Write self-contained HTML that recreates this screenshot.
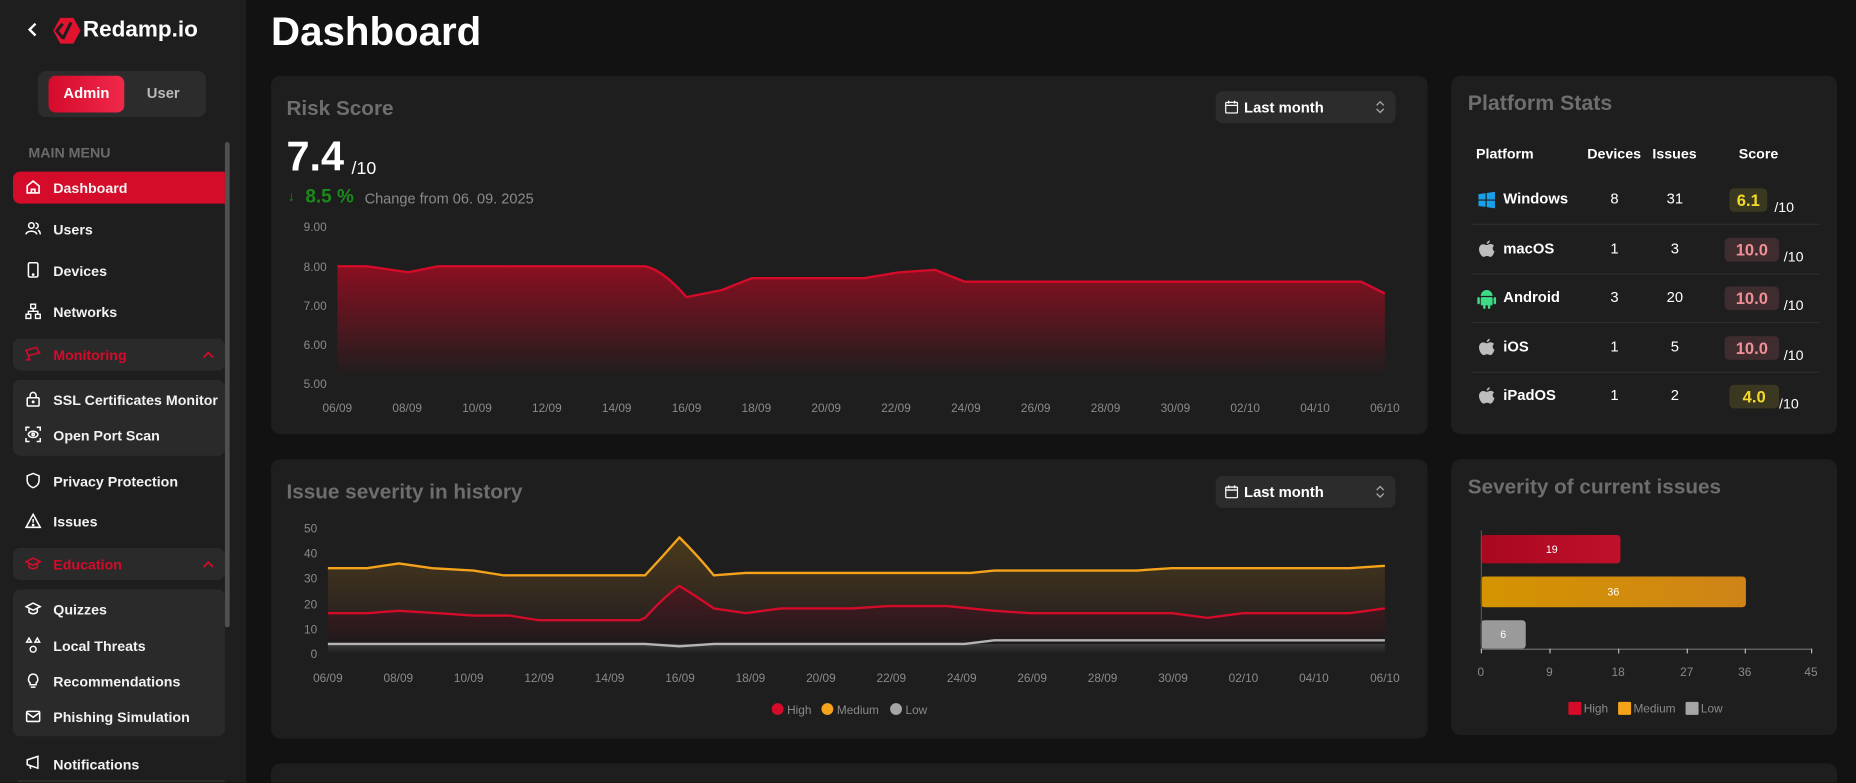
<!DOCTYPE html>
<html><head><meta charset="utf-8">
<style>
*{box-sizing:border-box;margin:0;padding:0}
html,body{width:1856px;height:783px;overflow:hidden;background:#121212}
body{font-family:"Liberation Sans",sans-serif;color:#fff}
#wrap{position:absolute;left:0;top:0;width:1568px;height:661px;transform:scale(1.18367);transform-origin:0 0;background:#121212;overflow:hidden}
.abs{position:absolute}
.side{position:absolute;left:0;top:0;width:208px;height:661px;background:#1e1e1e;overflow:hidden}
.nav{position:absolute;left:11px;width:179px;height:27px;font-size:12px;font-weight:bold;display:flex;align-items:center;padding-left:34px;color:#f2f2f2;white-space:nowrap}
.nav svg{position:absolute;left:10px;top:6px}
.grp{position:absolute;left:11px;width:179px;background:#2a2a2a;border-radius:6px}
.card{position:absolute;background:#1e1e1e;border-radius:8px}
.ttl{position:absolute;font-size:17.5px;font-weight:bold;color:#6e6e6e}
.sel{position:absolute;width:152px;height:27px;background:#2c2c2c;border-radius:6px;font-size:12.5px;font-weight:bold;color:#fff}
.sel span{position:absolute;left:24px;top:7px}
.ax{font-family:"Liberation Sans",sans-serif;font-size:10px;fill:#8a8a8a}
.th{position:absolute;top:123px;font-size:12px;font-weight:bold}
.row{position:absolute;left:1244px;width:293px;height:42px;border-bottom:1px solid #2e2e2e;font-size:12.5px}
.row .n{position:absolute;left:26px;top:13px;font-weight:bold}
.row .d{position:absolute;left:120px;width:0;top:13px;display:flex;justify-content:center}
.row .i{position:absolute;left:171px;width:0;top:13px;display:flex;justify-content:center}
.badge{position:absolute;top:11px;height:20px;border-radius:4px;font-weight:bold;font-size:14px;text-align:center;line-height:20px}
.y{background:#3a3820;color:#f3da2a}
.r{background:#3e2c2e;color:#f28e98}
.of{position:absolute;top:20px;font-size:12px}
</style></head><body><div id="wrap">

<div class="side">
  <svg class="abs" style="left:22px;top:18px" width="12" height="14" viewBox="0 0 12 14"><path d="M8 2 L3 7 L8 12" stroke="#fff" stroke-width="2" fill="none"/></svg>
  <svg class="abs" style="left:44px;top:15px" width="24" height="22" viewBox="0 0 24 22"><path d="M7 0 H18 L24 11 L18 22 H7 L1 11 Z" fill="#e2132f"/><path d="M9 5 L4 11 L9 17" stroke="#1e1e1e" stroke-width="2.6" fill="none"/><path d="M16 4 L9 18" stroke="#1e1e1e" stroke-width="2.6"/></svg>
  <div class="abs" style="left:70px;top:15px;font-size:19px;font-weight:bold">Redamp.io</div>
  <div class="abs" style="left:32px;top:60px;width:142px;height:39px;background:#2c2c2c;border-radius:7px"></div>
  <div class="abs" style="left:41px;top:64px;width:64px;height:31px;border-radius:6px;background:linear-gradient(90deg,#d50b2b,#f0284a);font-size:12.5px;font-weight:bold;text-align:center;line-height:31px">Admin</div>
  <div class="abs" style="left:124px;top:72px;font-size:12.5px;font-weight:bold;color:#b9b9b9">User</div>
  <div class="abs" style="left:24px;top:122px;font-size:12px;font-weight:bold;color:#6b6b6b">MAIN MENU</div>
  <div class="abs" style="left:190px;top:120px;width:4px;height:410px;background:#505050;border-radius:2px"></div>

  <div class="nav" style="top:145px;background:#d50b2a;border-radius:6px 0 0 6px"><svg width="14" height="14" viewBox="0 0 14 14" fill="none" stroke="#fff" stroke-width="1.4"><path d="M2 6 L7 2 L12 6 V12 H2 Z"/><path d="M5.5 12 V9 H8.5 V12"/></svg>Dashboard</div>
  <div class="nav" style="top:180px"><svg width="14" height="14" viewBox="0 0 14 14" fill="none" stroke="#fff" stroke-width="1.3"><circle cx="5.5" cy="4.5" r="2.3"/><path d="M1 12 C1 8.5 10 8.5 10 12"/><path d="M9 2.5 A2 2 0 0 1 9 7 M11 8.5 C12.5 9 13 10.5 13 12"/></svg>Users</div>
  <div class="nav" style="top:215px"><svg width="14" height="14" viewBox="0 0 14 14" fill="none" stroke="#fff" stroke-width="1.3"><rect x="3" y="1" width="8" height="12" rx="1.2"/><circle cx="7" cy="11" r=".5" fill="#fff"/></svg>Devices</div>
  <div class="nav" style="top:250px"><svg width="14" height="14" viewBox="0 0 14 14" fill="none" stroke="#fff" stroke-width="1.2"><rect x="5" y="1" width="4" height="3.5"/><rect x="1" y="9.5" width="4" height="3.5"/><rect x="9" y="9.5" width="4" height="3.5"/><path d="M7 4.5 V7 M3 9.5 V7 H11 V9.5"/></svg>Networks</div>

  <div class="grp" style="top:286px;height:27px"></div>
  <div class="nav" style="top:286px;color:#d50b2a"><svg width="14" height="14" viewBox="0 0 14 14" fill="none" stroke="#d50b2a" stroke-width="1.3"><path d="M1 4 L10 1.5 L12 6 L3 8.5 Z M4 8 L3 12 M1 12 H5 M11 5 L13 7"/></svg>Monitoring<svg style="left:160px;top:10px" width="10" height="7" viewBox="0 0 10 7"><path d="M1 6 L5 2 L9 6" stroke="#d50b2a" stroke-width="1.5" fill="none"/></svg></div>
  <div class="grp" style="top:321px;height:64px"></div>
  <div class="nav" style="top:324px"><svg width="14" height="14" viewBox="0 0 14 14" fill="none" stroke="#fff" stroke-width="1.3"><rect x="2" y="6" width="10" height="7" rx="1"/><path d="M4.5 6 V4 A2.5 2.5 0 0 1 9.5 4 V6"/><circle cx="7" cy="9.5" r=".6" fill="#fff"/></svg>SSL Certificates Monitor</div>
  <div class="nav" style="top:354px"><svg width="14" height="14" viewBox="0 0 14 14" fill="none" stroke="#fff" stroke-width="1.3"><path d="M1 4 V1 H4 M10 1 H13 V4 M13 10 V13 H10 M4 13 H1 V10"/><ellipse cx="7" cy="7" rx="4" ry="2.6"/><circle cx="7" cy="7" r="1"/></svg>Open Port Scan</div>
  <div class="nav" style="top:393px"><svg width="14" height="14" viewBox="0 0 14 14" fill="none" stroke="#fff" stroke-width="1.3"><path d="M7 1 L12 3 V7 C12 10 9.5 12 7 13 C4.5 12 2 10 2 7 V3 Z"/></svg>Privacy Protection</div>
  <div class="nav" style="top:427px"><svg width="14" height="14" viewBox="0 0 14 14" fill="none" stroke="#fff" stroke-width="1.3"><path d="M7 1.5 L13 12.5 H1 Z M7 5.5 V8.5"/><circle cx="7" cy="10.5" r=".5" fill="#fff"/></svg>Issues</div>

  <div class="grp" style="top:463px;height:27px"></div>
  <div class="nav" style="top:463px;color:#d50b2a"><svg width="14" height="14" viewBox="0 0 14 14" fill="none" stroke="#d50b2a" stroke-width="1.3"><path d="M1 5.5 L7 2.5 L13 5.5 L7 8.5 Z M3.5 7 V10 C5.5 12 8.5 12 10.5 10 V7"/></svg>Education<svg style="left:160px;top:10px" width="10" height="7" viewBox="0 0 10 7"><path d="M1 6 L5 2 L9 6" stroke="#d50b2a" stroke-width="1.5" fill="none"/></svg></div>
  <div class="grp" style="top:498px;height:124px"></div>
  <div class="nav" style="top:501px"><svg width="14" height="14" viewBox="0 0 14 14" fill="none" stroke="#fff" stroke-width="1.3"><path d="M1 5.5 L7 2.5 L13 5.5 L7 8.5 Z M3.5 7 V10 C5.5 12 8.5 12 10.5 10 V7"/></svg>Quizzes</div>
  <div class="nav" style="top:532px"><svg width="14" height="14" viewBox="0 0 14 14" fill="none" stroke="#fff" stroke-width="1.2"><path d="M3.5 1 L5.5 4.5 H1.5 Z M10.5 1 L12.5 4.5 H8.5 Z"/><circle cx="7" cy="10.5" r="2.5"/></svg>Local Threats</div>
  <div class="nav" style="top:562px"><svg width="14" height="14" viewBox="0 0 14 14" fill="none" stroke="#fff" stroke-width="1.3"><path d="M4.5 9 C2 7 3 1.5 7 1.5 C11 1.5 12 7 9.5 9 V10.5 H4.5 Z M5 12.5 H9"/></svg>Recommendations</div>
  <div class="nav" style="top:592px"><svg width="14" height="14" viewBox="0 0 14 14" fill="none" stroke="#fff" stroke-width="1.3"><rect x="1.5" y="3" width="11" height="8.5" rx="1"/><path d="M1.5 4 L7 8 L12.5 4"/></svg>Phishing Simulation</div>
  <div class="nav" style="top:631px;height:21px;overflow:hidden;align-items:flex-start;padding-top:8px"><svg width="14" height="14" viewBox="0 0 14 14" fill="none" stroke="#fff" stroke-width="1.3"><path d="M2 5 L11 2 V12 L2 9 Z M4 9.5 L5 12.5"/></svg>Notifications</div>
  <div class="abs" style="left:0;top:652px;width:208px;height:9px;background:#1e1e1e"></div>
  <div class="abs" style="left:15px;top:659px;width:175px;height:2px;background:#2e2e2e"></div>
</div>

<div class="abs" style="left:229px;top:8px;font-size:34px;font-weight:bold">Dashboard</div>

<!-- Risk card -->
<div class="card" style="left:229px;top:64px;width:977px;height:303px"></div>
<div class="ttl" style="left:242px;top:81px">Risk Score</div>
<div class="sel" style="left:1027px;top:77px"><svg class="abs" style="left:8px;top:8px" width="11" height="11" viewBox="0 0 11 11" fill="none" stroke="#fff" stroke-width="1.1"><rect x=".5" y="1.5" width="10" height="9" rx="1"/><path d="M.5 4 H10.5 M3 0 V2.5 M8 0 V2.5"/></svg><span>Last month</span><svg class="abs" style="left:135px;top:8px" width="8" height="11" viewBox="0 0 8 11" fill="none" stroke="#aaa" stroke-width="1.1"><path d="M1 4 L4 1 L7 4 M1 7 L4 10 L7 7"/></svg></div>
<div class="abs" style="left:242px;top:113px;font-size:35px;font-weight:bold">7.4</div>
<div class="abs" style="left:297px;top:134px;font-size:15px">/10</div>
<div class="abs" style="left:243px;top:159px;font-size:12px;color:#1a8a1a">↓</div>
<div class="abs" style="left:258px;top:158px;font-size:16px;font-weight:bold;color:#1a8a1a">8.5 %</div>
<div class="abs" style="left:308px;top:161px;font-size:12.3px;color:#8a8a8a">Change from 06. 09. 2025</div>

<svg class="abs" style="left:0;top:0" width="1568" height="661">
<defs>
<linearGradient id="gr" x1="0" y1="0" x2="0" y2="1"><stop offset="0" stop-color="#8a0f20"/><stop offset="1" stop-color="#1e1e1e"/></linearGradient>
<linearGradient id="go" x1="0" y1="0" x2="0" y2="1"><stop offset="0" stop-color="#4a3a1c"/><stop offset="1" stop-color="#2a2220"/></linearGradient>
<linearGradient id="gh" x1="0" y1="0" x2="0" y2="1"><stop offset="0" stop-color="#4a1a20"/><stop offset="1" stop-color="#1f1a1b"/></linearGradient>
<linearGradient id="gl" x1="0" y1="0" x2="0" y2="1"><stop offset="0" stop-color="#3a3a3a"/><stop offset="1" stop-color="#1e1e1e"/></linearGradient>
<linearGradient id="bh" x1="0" x2="1"><stop offset="0" stop-color="#a80820"/><stop offset="1" stop-color="#c0102a"/></linearGradient>
<linearGradient id="bm" x1="0" x2="1"><stop offset="0" stop-color="#d49400"/><stop offset="1" stop-color="#d08418"/></linearGradient>
</defs>
<g class="ax" text-anchor="end">
<text x="276" y="195">9.00</text><text x="276" y="229">8.00</text><text x="276" y="262">7.00</text><text x="276" y="295">6.00</text><text x="276" y="328">5.00</text>
</g>
<path d="M285 225 L310 225 L345 230 L370 225 L545 225 Q560 228 580 251 L610 245 L635 235 L730 235 L760 230 L790 228 L815 238 L1150 238 L1170 248 L1170 318 L285 318 Z" fill="url(#gr)"/>
<path d="M285 225 L310 225 L345 230 L370 225 L545 225 Q560 228 580 251 L610 245 L635 235 L730 235 L760 230 L790 228 L815 238 L1150 238 L1170 248" stroke="#d50b2a" stroke-width="2" fill="none" stroke-linejoin="round"/>
<g class="ax" text-anchor="middle">
<text x="285" y="348">06/09</text><text x="344" y="348">08/09</text><text x="403" y="348">10/09</text><text x="462" y="348">12/09</text><text x="521" y="348">14/09</text><text x="580" y="348">16/09</text><text x="639" y="348">18/09</text><text x="698" y="348">20/09</text><text x="757" y="348">22/09</text><text x="816" y="348">24/09</text><text x="875" y="348">26/09</text><text x="934" y="348">28/09</text><text x="993" y="348">30/09</text><text x="1052" y="348">02/10</text><text x="1111" y="348">04/10</text><text x="1170" y="348">06/10</text>
</g>
</svg>

<!-- Platform card -->
<div class="card" style="left:1226px;top:64px;width:326px;height:303px"></div>
<div class="ttl" style="left:1240px;top:77px;font-size:18px">Platform Stats</div>
<div class="th" style="left:1247px">Platform</div>
<div class="th" style="left:1341px">Devices</div>
<div class="th" style="left:1396px">Issues</div>
<div class="th" style="left:1469px">Score</div>

<div class="row" style="top:148px"><svg class="abs" style="left:5px;top:14px" width="14" height="14" viewBox="0 0 14 14"><path d="M0 2 L6 1.2 V6.5 H0 Z M7 1 L14 0 V6.5 H7 Z M0 7.5 H6 V12.8 L0 12 Z M7 7.5 H14 V14 L7 13 Z" fill="#1aa0e8"/></svg><span class="n">Windows</span><span class="d">8</span><span class="i">31</span><span class="badge y" style="left:217px;width:32px">6.1</span><span class="of" style="left:255px">/10</span></div>
<div class="row" style="top:190px"><svg class="abs" style="left:5px;top:13px" width="14" height="16" viewBox="0 0 14 16"><path d="M7 4 C8 4 9 3 11 3.2 C12 3.3 12.8 4 13.2 4.6 C11.5 5.7 11.8 8.6 13.6 9.4 C13 11.2 11.8 14 10.2 14 C9 14 8.6 13.3 7.3 13.3 C6 13.3 5.5 14 4.4 14 C2.8 14 .5 10.5.5 7.6 C.5 5 2.2 3.3 4 3.3 C5.3 3.3 6 4 7 4 Z M7 3 C7 1.6 8.2.3 9.6.2 C9.7 1.7 8.4 3 7 3 Z" fill="#bdbdbd"/></svg><span class="n">macOS</span><span class="d">1</span><span class="i">3</span><span class="badge r" style="left:213px;width:46px">10.0</span><span class="of" style="left:263px">/10</span></div>
<div class="row" style="top:231px"><svg class="abs" style="left:4px;top:13px" width="16" height="17" viewBox="0 0 16 17" fill="#3ddc84"><path d="M3 6 A5 5 0 0 1 13 6 Z"/><rect x="3" y="7" width="10" height="7" rx="1"/><rect x="0" y="7" width="2.2" height="6" rx="1.1"/><rect x="13.8" y="7" width="2.2" height="6" rx="1.1"/><rect x="5" y="13" width="2" height="4" rx="1"/><rect x="9" y="13" width="2" height="4" rx="1"/></svg><span class="n">Android</span><span class="d">3</span><span class="i">20</span><span class="badge r" style="left:213px;width:46px">10.0</span><span class="of" style="left:263px">/10</span></div>
<div class="row" style="top:273px"><svg class="abs" style="left:5px;top:13px" width="14" height="16" viewBox="0 0 14 16"><path d="M7 4 C8 4 9 3 11 3.2 C12 3.3 12.8 4 13.2 4.6 C11.5 5.7 11.8 8.6 13.6 9.4 C13 11.2 11.8 14 10.2 14 C9 14 8.6 13.3 7.3 13.3 C6 13.3 5.5 14 4.4 14 C2.8 14 .5 10.5.5 7.6 C.5 5 2.2 3.3 4 3.3 C5.3 3.3 6 4 7 4 Z M7 3 C7 1.6 8.2.3 9.6.2 C9.7 1.7 8.4 3 7 3 Z" fill="#bdbdbd"/></svg><span class="n">iOS</span><span class="d">1</span><span class="i">5</span><span class="badge r" style="left:213px;width:46px">10.0</span><span class="of" style="left:263px">/10</span></div>
<div class="row" style="top:314px;border-bottom:none"><svg class="abs" style="left:5px;top:13px" width="14" height="16" viewBox="0 0 14 16"><path d="M7 4 C8 4 9 3 11 3.2 C12 3.3 12.8 4 13.2 4.6 C11.5 5.7 11.8 8.6 13.6 9.4 C13 11.2 11.8 14 10.2 14 C9 14 8.6 13.3 7.3 13.3 C6 13.3 5.5 14 4.4 14 C2.8 14 .5 10.5.5 7.6 C.5 5 2.2 3.3 4 3.3 C5.3 3.3 6 4 7 4 Z M7 3 C7 1.6 8.2.3 9.6.2 C9.7 1.7 8.4 3 7 3 Z" fill="#bdbdbd"/></svg><span class="n">iPadOS</span><span class="d">1</span><span class="i">2</span><span class="badge y" style="left:217px;width:42px">4.0</span><span class="of" style="left:259px">/10</span></div>

<!-- Issue card -->
<div class="card" style="left:229px;top:388px;width:977px;height:236px"></div>
<div class="ttl" style="left:242px;top:405px">Issue severity in history</div>
<div class="sel" style="left:1027px;top:402px"><svg class="abs" style="left:8px;top:8px" width="11" height="11" viewBox="0 0 11 11" fill="none" stroke="#fff" stroke-width="1.1"><rect x=".5" y="1.5" width="10" height="9" rx="1"/><path d="M.5 4 H10.5 M3 0 V2.5 M8 0 V2.5"/></svg><span>Last month</span><svg class="abs" style="left:135px;top:8px" width="8" height="11" viewBox="0 0 8 11" fill="none" stroke="#aaa" stroke-width="1.1"><path d="M1 4 L4 1 L7 4 M1 7 L4 10 L7 7"/></svg></div>

<div class="card" style="left:1226px;top:388px;width:326px;height:233px"></div>
<div class="ttl" style="left:1240px;top:401px">Severity of current issues</div>

<svg class="abs" style="left:0;top:0" width="1568" height="661">
<g class="ax" text-anchor="end">
<text x="268" y="450">50</text><text x="268" y="471">40</text><text x="268" y="492">30</text><text x="268" y="514">20</text><text x="268" y="535">10</text><text x="268" y="556">0</text>
</g>
<path d="M277 480 L310 480 L337 476 L365 480 L400 482 L425 486 L545 486 Q560 470 574 454 Q590 470 603 486 L630 484 L820 484 L840 482 L960 482 L990 480 L1140 480 L1170 478 L1170 518 L1140 518 L1050 518 L1020 522 L990 518 L870 518 L840 516 L800 512 L750 512 L720 514 L660 514 L630 518 L603 514 Q590 505 574 495 Q560 505 545 522 L540 524 L455 524 L430 520 L400 520 L370 518 L337 516 L310 518 L277 518 Z" fill="url(#go)"/>
<path d="M277 518 L310 518 L337 516 L370 518 L400 520 L430 520 L455 524 L540 524 L545 522 Q560 505 574 495 Q590 505 603 514 L630 518 L660 514 L720 514 L750 512 L800 512 L840 516 L870 518 L990 518 L1020 522 L1050 518 L1140 518 L1170 514 L1170 544 L277 544 Z" fill="url(#gh)"/>
<rect x="277" y="544" width="893" height="8" fill="url(#gl)"/>
<path d="M277 480 L310 480 L337 476 L365 480 L400 482 L425 486 L545 486 Q560 470 574 454 Q590 470 603 486 L630 484 L820 484 L840 482 L960 482 L990 480 L1140 480 L1170 478" stroke="#f5a31a" stroke-width="2" fill="none" stroke-linejoin="round"/>
<path d="M277 518 L310 518 L337 516 L370 518 L400 520 L430 520 L455 524 L540 524 L545 522 Q560 505 574 495 Q590 505 603 514 L630 518 L660 514 L720 514 L750 512 L800 512 L840 516 L870 518 L990 518 L1020 522 L1050 518 L1140 518 L1170 514" stroke="#d50b2a" stroke-width="2" fill="none" stroke-linejoin="round"/>
<path d="M277 544 L545 544 L574 546 L603 544 L815 544 L840 541 L1170 541" stroke="#b5b5b5" stroke-width="2" fill="none"/>
<g class="ax" text-anchor="middle">
<text x="277" y="576">06/09</text><text x="336.5" y="576">08/09</text><text x="396" y="576">10/09</text><text x="455.5" y="576">12/09</text><text x="515" y="576">14/09</text><text x="574.5" y="576">16/09</text><text x="634" y="576">18/09</text><text x="693.5" y="576">20/09</text><text x="753" y="576">22/09</text><text x="812.5" y="576">24/09</text><text x="872" y="576">26/09</text><text x="931.5" y="576">28/09</text><text x="991" y="576">30/09</text><text x="1050.5" y="576">02/10</text><text x="1110" y="576">04/10</text><text x="1170" y="576">06/10</text>
</g>
<g class="ax">
<circle cx="657" cy="599" r="5" fill="#d50b2a"/><text x="665" y="603">High</text>
<circle cx="699" cy="599" r="5" fill="#f5a31a"/><text x="707" y="603">Medium</text>
<circle cx="757" cy="599" r="5" fill="#a5a5a5"/><text x="765" y="603">Low</text>
</g>

<rect x="1251" y="452" width="118" height="24" rx="3" fill="url(#bh)"/>
<rect x="1251" y="487" width="224" height="26" rx="3" fill="url(#bm)"/>
<rect x="1251" y="524" width="38" height="24" rx="3" fill="#9a9a9a"/>
<line x1="1251.5" y1="448" x2="1251.5" y2="548" stroke="#555" stroke-width="1"/>
<line x1="1251" y1="548.5" x2="1530" y2="548.5" stroke="#6a6a6a" stroke-width="1"/>
<g stroke="#bbb"><line x1="1251.5" y1="548" x2="1251.5" y2="552"/><line x1="1309.5" y1="548" x2="1309.5" y2="552"/><line x1="1367.5" y1="548" x2="1367.5" y2="552"/><line x1="1425.5" y1="548" x2="1425.5" y2="552"/><line x1="1474.5" y1="548" x2="1474.5" y2="552"/><line x1="1530.5" y1="548" x2="1530.5" y2="552"/></g>
<g font-family="Liberation Sans" font-size="9" fill="#fff" text-anchor="middle"><text x="1311" y="467">19</text><text x="1363" y="503">36</text><text x="1270" y="539">6</text></g>
<g class="ax" text-anchor="middle"><text x="1251" y="571">0</text><text x="1309" y="571">9</text><text x="1367" y="571">18</text><text x="1425" y="571">27</text><text x="1474" y="571">36</text><text x="1530" y="571">45</text></g>
<g class="ax"><rect x="1325" y="593" width="11" height="11" rx="1" fill="#d50b2a"/><text x="1338" y="602">High</text><rect x="1367" y="593" width="11" height="11" rx="1" fill="#f5a31a"/><text x="1380" y="602">Medium</text><rect x="1424" y="593" width="11" height="11" rx="1" fill="#a5a5a5"/><text x="1437" y="602">Low</text></g>
</svg>

<div class="card" style="left:229px;top:645px;width:1323px;height:40px"></div>
</div></body></html>
